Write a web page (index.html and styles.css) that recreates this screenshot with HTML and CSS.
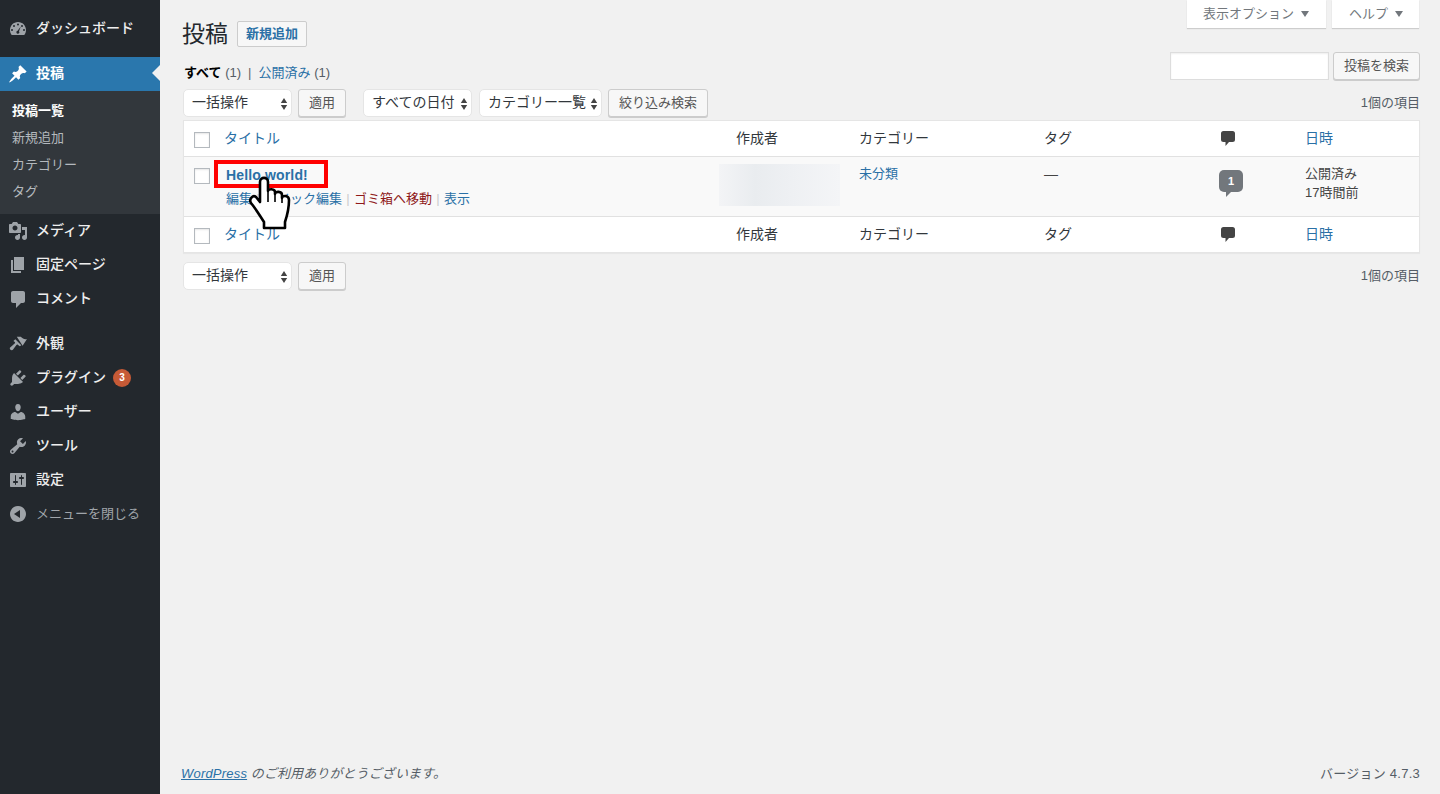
FILE: index.html
```html
<!DOCTYPE html>
<html lang="ja">
<head>
<meta charset="utf-8">
<title>投稿</title>
<link rel="stylesheet" href="styles.css">
</head>
<body>
<div class="wrap">
  <nav class="side">
    <ul class="menu">
      <li class="item first"><svg class="ic" viewBox="0 0 20 20"><path d="M3.76 16h12.48C17.34 14.6 18 12.9 18 11c0-4.42-3.58-8-8-8s-8 3.58-8 8c0 1.9.66 3.6 1.76 5zM10 4.5a1 1 0 1 1 0 2 1 1 0 0 1 0-2zM6 6a1 1 0 1 1 0 2 1 1 0 0 1 0-2zm8 0a1 1 0 1 1 0 2 1 1 0 0 1 0-2zM4 10a1 1 0 1 1 0 2 1 1 0 0 1 0-2zm12 0a1 1 0 1 1 0 2 1 1 0 0 1 0-2zm-3.2-2.6L11 12.2a1.5 1.5 0 1 1-1.4-.5z" fill-rule="evenodd"/></svg><span>ダッシュボード</span></li>
      <li class="item current"><svg class="ic" viewBox="0 0 20 20"><path d="M10.44 3.02l1.82-1.82 6.36 6.35-1.83 1.82c-1.05-.68-2.48-.57-3.41.36l-.75.75c-.92.93-1.04 2.35-.35 3.41l-1.83 1.82-2.41-2.41-2.8 2.79c-.42.42-3.38 2.71-3.8 2.29s1.86-3.39 2.28-3.81l2.79-2.79L4.1 9.36l1.83-1.82c1.05.69 2.48.57 3.4-.36l.75-.75c.93-.92 1.05-2.35.36-3.41z"/></svg><span>投稿</span></li>
      <li class="sub">
        <a class="subitem on">投稿一覧</a>
        <a class="subitem">新規追加</a>
        <a class="subitem">カテゴリー</a>
        <a class="subitem">タグ</a>
      </li>
      <li class="item"><svg class="ic" viewBox="0 0 20 20"><path d="M13 11V4c0-.55-.45-1-1-1h-1.67L9 1H5L3.67 3H2c-.55 0-1 .45-1 1v7c0 .55.45 1 1 1h10c.55 0 1-.45 1-1zM7 4.5c1.38 0 2.5 1.12 2.5 2.5S8.38 9.5 7 9.5 4.5 8.38 4.5 7 5.62 4.5 7 4.5zM14 6h5v10.5c0 1.38-1.12 2.5-2.5 2.5S14 17.88 14 16.5s1.12-2.5 2.5-2.5c.17 0 .34.02.5.05V9h-3V6zm-4 8.05V13h2v3.5c0 1.38-1.12 2.5-2.5 2.5S7 17.88 7 16.5 8.12 14 9.5 14c.17 0 .34.02.5.05z"/></svg><span>メディア</span></li>
      <li class="item"><svg class="ic" viewBox="0 0 20 20"><path d="M6 15V2h10v13H6zm-1 1h8v2H3V5h2v11z"/></svg><span>固定ページ</span></li>
      <li class="item"><svg class="ic" viewBox="0 0 20 20"><path d="M5 2h10c1.1 0 2 .9 2 2v8c0 1.1-.9 2-2 2h-2l-5 5v-5H5c-1.1 0-2-.9-2-2V4c0-1.100.9-2 2-2z"/></svg><span>コメント</span></li>
      <li class="item gap"><svg class="ic" viewBox="0 0 20 20"><path d="M8.800 2.800h4c2 2.200 3.800 2.700 6.200 2.200l-4.400 6.800zM7.300 5.200l6 6-1.500 1-1.700-1.300c-.7-.5-1.200-.4-1.700.2l-3.500 4.700c-1 1.300-3.800-.3-3-2l4.700-4.200c.6-.5.600-1 .2-1.500L5.400 7z"/></svg><span>外観</span></li>
      <li class="item"><svg class="ic" viewBox="0 0 20 20"><path d="M13.11 4.36L9.87 7.6 8 5.73l3.24-3.24c.35-.34 1.05-.2 1.56.32.52.51.66 1.21.31 1.55zm-8 1.77l.91-1.12 9.01 9.01-1.19.84c-.71.71-2.63 1.16-3.82 1.16H6.14L4.9 17.26c-.59.59-1.54.59-2.12 0-.59-.58-.59-1.53 0-2.12l1.24-1.24v-3.88c0-1.13.4-3.19 1.09-3.89zm7.26 3.97l3.24-3.24c.34-.35 1.04-.21 1.55.31.52.51.66 1.21.31 1.55l-3.24 3.25z"/></svg><span>プラグイン</span><b class="badge">3</b></li>
      <li class="item"><svg class="ic" viewBox="0 0 20 20"><path d="M10 9.25c-2.27 0-2.73-3.44-2.73-3.44C7 4.02 7.82 2 9.97 2c2.16 0 2.98 2.02 2.71 3.81 0 0-.41 3.44-2.68 3.44zm0 2.57L12.72 10c2.39 0 4.52 2.33 4.52 4.53v2.49s-3.65 1.13-7.24 1.13c-3.65 0-7.24-1.13-7.24-1.13v-2.49c0-2.25 1.94-4.48 4.47-4.48z"/></svg><span>ユーザー</span></li>
      <li class="item"><svg class="ic" viewBox="0 0 20 20"><path d="M16.68 9.77c-1.34 1.34-3.3 1.67-4.95.99l-5.41 6.52c-.99.99-2.59.99-3.58 0s-.99-2.59 0-3.57l6.52-5.42c-.68-1.65-.35-3.61.99-4.95 1.28-1.28 3.12-1.62 4.72-1.06l-2.89 2.89 2.82 2.82 2.86-2.87c.53 1.58.18 3.39-1.08 4.65zM3.81 16.21c.4.39 1.04.39 1.43 0 .4-.4.4-1.04 0-1.43-.39-.4-1.03-.4-1.43 0-.39.39-.39 1.03 0 1.43z"/></svg><span>ツール</span></li>
      <li class="item"><svg class="ic" viewBox="0 0 20 20"><path fill-rule="evenodd" d="M18 16V4c0-.55-.45-1-1-1H3c-.55 0-1 .45-1 1v12c0 .55.45 1 1 1h14c.55 0 1-.45 1-1zM8 11h1c.55 0 1 .45 1 1s-.45 1-1 1H8v1.500c0 .28-.22.5-.5.5s-.5-.22-.5-.5V13H6c-.55 0-1-.45-1-1s.45-1 1-1h1V5.500c0-.28.22-.5.5-.5s.5.22.5.5V11zm5-2h-1c-.55 0-1-.45-1-1s.45-1 1-1h1V5.500c0-.28.22-.5.5-.5s.5.22.5.5V7h1c.55 0 1 .45 1 1s-.45 1-1 1h-1v5.500c0 .28-.22.5-.5.5s-.5-.22-.5-.5V9z"/></svg><span>設定</span></li>
      <li class="item close"><svg class="ic" viewBox="0 0 20 20"><path fill-rule="evenodd" d="M18 10c0-4.42-3.58-8-8-8s-8 3.58-8 8 3.58 8 8 8 8-3.58 8-8zm-6-4v8L6 10z"/></svg><span>メニューを閉じる</span></li>
    </ul>
  </nav>
  <main class="main">
    <div class="tabs">
      <div class="tab">表示オプション<i class="tri"></i></div>
      <div class="tab">ヘルプ<i class="tri"></i></div>
    </div>
    <div class="head">
      <h1>投稿</h1>
      <a class="add">新規追加</a>
    </div>
    <div class="statusrow">
      <div class="status"><b>すべて</b> <span class="cnt">(1)</span><span class="pipe">|</span><a>公開済み</a> <span class="cnt">(1)</span></div>
      <div class="search"><input class="sinput" type="text"><button class="btn">投稿を検索</button></div>
    </div>
    <div class="nav top">
      <div class="sel w108">一括操作<svg class="arrows" viewBox="0 0 8 14"><path d="M4 1l3.200 5H.8zM4 13L.8 8h6.400z"/></svg></div>
      <button class="btn apply">適用</button>
      <div class="sel w109 ml17">すべての日付<svg class="arrows" viewBox="0 0 8 14"><path d="M4 1l3.200 5H.8zM4 13L.8 8h6.400z"/></svg></div>
      <div class="sel w123 ml7">カテゴリー一覧<svg class="arrows" viewBox="0 0 8 14"><path d="M4 1l3.200 5H.8zM4 13L.8 8h6.400z"/></svg></div>
      <button class="btn filter">絞り込み検索</button>
      <div class="count">1個の項目</div>
    </div>
    <div class="table">
      <div class="row hdr">
        <div class="c cb"><i class="check"></i></div>
        <div class="c title"><a>タイトル</a></div>
        <div class="c author">作成者</div>
        <div class="c cat">カテゴリー</div>
        <div class="c tag">タグ</div>
        <div class="c com"><svg class="bubble" viewBox="0 0 14 16"><path d="M2.500 0h9A2.500 2.500 0 0 1 14 2.500v6A2.500 2.500 0 0 1 11.500 11H8l-3.500 4v-4h-2A2.500 2.500 0 0 1 0 8.500v-6A2.500 2.500 0 0 1 2.500 0z"/></svg></div>
        <div class="c date"><a>日時</a></div>
      </div>
      <div class="row post">
        <div class="c cb"><i class="check"></i></div>
        <div class="c title">
          <a class="ptitle">Hello world!</a>
          <div class="actions"><a>編集</a><span class="sep">|</span><a>クイック編集</a><span class="sep">|</span><a class="trash">ゴミ箱へ移動</a><span class="sep">|</span><a>表示</a></div>
        </div>
        <div class="c author"><div class="blur"></div></div>
        <div class="c cat"><a>未分類</a></div>
        <div class="c tag dash">—</div>
        <div class="c com"><span class="cbubble">1</span></div>
        <div class="c date small">公開済み<br>17時間前</div>
      </div>
      <div class="row ftr">
        <div class="c cb"><i class="check"></i></div>
        <div class="c title"><a>タイトル</a></div>
        <div class="c author">作成者</div>
        <div class="c cat">カテゴリー</div>
        <div class="c tag">タグ</div>
        <div class="c com"><svg class="bubble" viewBox="0 0 14 16"><path d="M2.500 0h9A2.500 2.500 0 0 1 14 2.500v6A2.500 2.500 0 0 1 11.500 11H8l-3.500 4v-4h-2A2.500 2.500 0 0 1 0 8.500v-6A2.500 2.500 0 0 1 2.500 0z"/></svg></div>
        <div class="c date"><a>日時</a></div>
      </div>
    </div>
    <div class="nav bottom">
      <div class="sel w108">一括操作<svg class="arrows" viewBox="0 0 8 14"><path d="M4 1l3.200 5H.8zM4 13L.8 8h6.400z"/></svg></div>
      <button class="btn apply">適用</button>
      <div class="count">1個の項目</div>
    </div>
    <footer class="foot">
      <div class="thanks"><a>WordPress</a> のご利用ありがとうございます。</div>
      <div class="ver">バージョン 4.7.3</div>
    </footer>
    <div class="redbox"></div>
    <svg class="hand" viewBox="0 0 44 54"><path d="M12 6C12 .5 20 .5 20 6V15C20 12.500 27 12.500 27 16V18C27 15 34 15 34 19V22C34 19 41 19 41 24 41 33 39 40 37 46V52H16V46C12 40 8 33 3 27 .5 23 5 18.500 8 21L12 26Z" fill="#fff" stroke="#000" stroke-width="2.600" stroke-linejoin="round"/><path d="M20 15V26M27 17V26M34 21V27" fill="none" stroke="#000" stroke-width="1.600"/></svg>
  </main>
</div>
</body>
</html>
```
FILE: styles.css
```css
* { box-sizing: border-box; }
html, body { margin: 0; height: 100%; }
body {
  background: #f1f1f1;
  color: #444;
  font: 13px/1.4 "Liberation Sans", "Noto Sans CJK JP", sans-serif;
  overflow: hidden;
}
a { color: #2a70a6; text-decoration: none; }
.wrap { display: flex; height: 794px; }

.side { width: 160px; flex: none; background: #23282d; }
.menu { list-style: none; margin: 0; padding: 12px 0 0; }
.item {
  display: flex; align-items: center; height: 34px; padding-left: 8px;
  color: #eee; font-size: 14px; font-weight: 500;
}
.item span { margin-left: 8px; }
.item.first { margin-bottom: 11px; }
.item.gap { margin-top: 11px; }
.ic { width: 20px; height: 20px; fill: #9ea3a8; flex: none; }
.item.current { background: #2a77ad; color: #fff; position: relative; }
.item.current .ic { fill: #fff; }
.item.current span { font-weight: 700; }
.item.current::after {
  content: ""; position: absolute; right: 0; top: 8px;
  border: 8px solid transparent; border-left-width: 0; border-right-color: #f1f1f1;
}
.sub { background: #32373c; padding: 7px 0 8.800px; display: flex; flex-direction: column; }
.subitem { color: #b4b9be; height: 26.800px; padding-left: 12px; line-height: 26px; font-size: 13px; }
.subitem:last-child { padding-top: 1px; }
.subitem.on { color: #fff; font-weight: 700; }
.badge {
  width: 18px; height: 18px; border-radius: 50%; background: #c65a36; color: #fff;
  font-size: 10px; line-height: 18px; text-align: center; margin-left: 7px;
}
.close { color: #a0a5aa; font-size: 13px; font-weight: 400; }

.main { flex: 1; position: relative; padding: 0 20px 0 23px; min-width: 0; }
.tabs { position: absolute; top: 0; right: 21px; display: flex; gap: 6px; }
.tab {
  height: 28px; background: #fff; color: #72777c;
  box-shadow: 0 1px 1px rgba(0,0,0,.15); display: flex; align-items: center; gap: 6px; font-size: 13px;
}
.tab:first-child { width: 139px; padding-left: 16px; }
.tab:last-child { width: 87px; padding-left: 17px; }
.tri { border: 4.500px solid transparent; border-top: 6px solid #72777c; border-bottom: 0; margin-left: 1px; }

.head { display: flex; align-items: center; padding-top: 18px; height: 50px; }
h1 { margin: 0 0 0 -1px; font-size: 23px; font-weight: 400; color: #23282d; line-height: 30px; }
.add {
  margin-left: 9px; width: 70px; height: 26px; border: 1px solid #ccc; border-radius: 2px;
  background: #f7f7f7; font-size: 13px; font-weight: 700; text-align: center; line-height: 24px;
}

.statusrow { display: flex; justify-content: space-between; height: 37px; }
.status { margin: 14px 0 0 1px; font-size: 13px; line-height: 18px; }
.status b { color: #000; }
.cnt { color: #555d66; }
.pipe { color: #666; margin: 0 7px 0 7px; }
.search { display: flex; gap: 4px; margin-top: 2px; }
.sinput { width: 159px; height: 28px; border: 1px solid #ddd; background: #fff; box-shadow: inset 0 1px 2px rgba(0,0,0,.07); }
.btn {
  font: inherit; color: #555; background: #f7f7f7; border: 1px solid #ccc; border-radius: 3px;
  box-shadow: 0 1px 0 #ccc; height: 28px; padding: 0; font-size: 13px;
}
.search .btn { width: 87px; }

.nav { display: flex; align-items: flex-start; }
.nav.top { height: 31px; margin-top: 2px; }
.sel {
  position: relative; height: 28px; background: #fff; border: 1px solid #e5e5e5; border-radius: 5px;
  padding-left: 8px; line-height: 24px; font-size: 14px; color: #32373c;
}
.arrows { position: absolute; right: 3px; top: 7px; width: 8px; height: 14px; fill: #444; }
.w108 { width: 109px; }
.w109 { width: 109px; }
.w123 { width: 123px; }
.ml17 { margin-left: 17px; }
.ml7 { margin-left: 7px; }
.apply { width: 48px; margin-left: 6px; }
.filter { width: 100px; margin-left: 6px; }
.count { margin-left: auto; font-size: 13px; line-height: 28px; color: #555d66; }

.table { background: #fff; border: 1px solid #e5e5e5; box-shadow: 0 1px 1px rgba(0,0,0,.04); }
.row { display: flex; }
.hdr { height: 36px; border-bottom: 1px solid #e1e1e1; }
.post { height: 60px; background: #f9f9f9; border-bottom: 1px solid #e1e1e1; }
.ftr { height: 35px; }
.c { font-size: 14px; line-height: 20px; padding-top: 8px; color: #32373c; flex: none; }
.hdr .c, .ftr .c { padding-top: 7px; }
.hdr .cb, .ftr .cb, .cb { padding: 0; position: relative; width: 40px; }
.check { position: absolute; left: 10px; top: 11px; width: 16px; height: 16px; background: #fff; border: 1px solid #b4b9be; box-shadow: inset 0 1px 2px rgba(0,0,0,.1); }
.title { width: 512px; }
.author { width: 123px; position: relative; }
.cat { width: 185px; }
.tag { width: 173px; }
.com { width: 88px; position: relative; padding-left: 3px; }
.date { flex: 1; }
.bubble { width: 14px; height: 16px; fill: #444; display: block; margin: 3px 0 0 1px; }

.ptitle { font-weight: 700; font-size: 14px; margin-left: 2px; line-height: 20px; display: block; letter-spacing: .15px; }
.actions { font-size: 13px; margin: 5px 0 0 2px; line-height: 18px; white-space: nowrap; }
.sep { color: #ccc; margin: 0 4.300px; }
.trash { color: #8f1a1a; }
.post .cat, .post .tag { font-size: 13px; padding-top: 7px; }
.post .tag.dash { font-size: 14px; color: #444; }
.post .date { font-size: 13px; line-height: 19px; color: #444; padding-top: 7px; }
.blur {
  position: absolute; left: -17px; top: 7px; width: 121px; height: 42px;
  background: linear-gradient(90deg, #f3f4f6 0, #e9ecef 30%, #eef0f3 60%, #f4f5f7 100%);
}
.cbubble {
  display: block; width: 24px; height: 22px; border-radius: 5px; background: #72777c; color: #fff;
  font-size: 11px; font-weight: 700; text-align: center; line-height: 22px; position: relative; margin-top: 5px; margin-left: -1px;
}
.cbubble::after {
  content: ""; position: absolute; left: 7px; bottom: -5px;
  border-right: 5px solid transparent; border-top: 5px solid #72777c;
}

.nav.bottom { margin-top: 9px; }
.foot {
  position: absolute; left: 21px; right: 20px; top: 764px;
  display: flex; justify-content: space-between; font-size: 13px; line-height: 20px; color: #555d66;
}
.thanks { font-style: italic; letter-spacing: .1px; }
.thanks a { text-decoration: underline; letter-spacing: .2px; }
.ver { letter-spacing: .25px; }
.redbox { position: absolute; left: 54px; top: 160px; width: 114px; height: 28px; border: 4px solid #f00; }
.hand { position: absolute; left: 88px; top: 176px; width: 44px; height: 54px; }
```
